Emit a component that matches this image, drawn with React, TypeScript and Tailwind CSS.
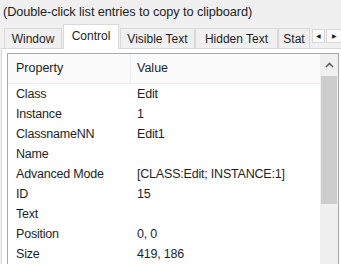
import React from 'react';

const rows: [string, string][] = [
  ['Class', 'Edit'],
  ['Instance', '1'],
  ['ClassnameNN', 'Edit1'],
  ['Name', ''],
  ['Advanced Mode', '[CLASS:Edit; INSTANCE:1]'],
  ['ID', '15'],
  ['Text', ''],
  ['Position', '0, 0'],
  ['Size', '419, 186'],
];

const tabs = [
  { label: 'Window', w: 'w-[58px]' },
  { label: 'Control', w: 'w-[56px]', active: true },
  { label: 'Visible Text', w: 'w-[75px]' },
  { label: 'Hidden Text', w: 'w-[83px]' },
  { label: 'Stat', w: 'w-[32px]' },
];

export default function App() {
  return (
    <div className="w-[341px] h-[264px] overflow-hidden bg-[#f0f0f0] text-[#1e1e1e] font-['Liberation_Sans',Arial,sans-serif] flex flex-col">
      {/* hint */}
      <div className="h-[25px] pl-[3px] pt-[4px] text-[12.8px] leading-[16px] tracking-[-0.1px]">
        (Double-click list entries to copy to clipboard)
      </div>

      {/* tab strip */}
      <div className="h-[24px] flex items-end pl-[4px] relative z-10">
        {tabs.map(t => (
          <div
            key={t.label}
            className={`${t.w} shrink-0 flex items-center justify-center text-[12px] border-t border-l border-r border-[#d9d9d9] ${
              t.active
                ? 'h-[25px] bg-white -mb-px pb-[2px] mx-[1px]'
                : 'h-[20px] bg-[#f0f0f0] pt-[1px]'
            }`}
          >
            {t.label}
          </div>
        ))}
        <div className="flex ml-[2px] mb-[5px] gap-[1px]">
          <div className="w-[13px] h-[14px] border border-[#d9d9d9] bg-[#fafafa] flex items-center justify-center text-[6px] leading-none">◀</div>
          <div className="w-[16px] h-[14px] border border-[#d9d9d9] bg-[#fafafa] flex items-center justify-center text-[6px] leading-none">▶</div>
        </div>
      </div>

      {/* panel */}
      <div className="flex-1 bg-white border-t border-l border-[#d9d9d9] ml-[1px] pl-[5px] pt-[4px]">
        <div className="h-full border-t border-l border-r border-[#a9a9a9] mr-[2px] flex">
          <div className="flex-1 flex flex-col">
            {/* header */}
            <div className="h-[30px] flex bg-[#fbfbfb] border-b border-[#e3ebf5] text-[12.5px]">
              <div className="w-[123px] border-r border-[#e8eef6] pl-[8px] flex items-center">Property</div>
              <div className="pl-[6px] flex items-center">Value</div>
            </div>
            {rows.map(([k, v]) => (
              <div key={k} className="h-[20px] flex items-center text-[12.5px] tracking-[-0.2px]">
                <div className="w-[124px] pl-[8px] whitespace-nowrap">{k}</div>
                <div className="pl-[5px] whitespace-nowrap">{v}</div>
              </div>
            ))}
          </div>
          {/* scrollbar */}
          <div className="w-[18px] bg-[#f0f0f0] flex flex-col">
            <div className="h-[22px] flex items-center justify-center">
              <svg width="9" height="6" viewBox="0 0 9 6">
                <path d="M1 5 L4.5 1.5 L8 5" fill="none" stroke="#606060" strokeWidth="1.6" />
              </svg>
            </div>
            <div className="h-[128px] bg-[#cdcdcd] mx-[1px]" />
          </div>
        </div>
      </div>
    </div>
  );
}
